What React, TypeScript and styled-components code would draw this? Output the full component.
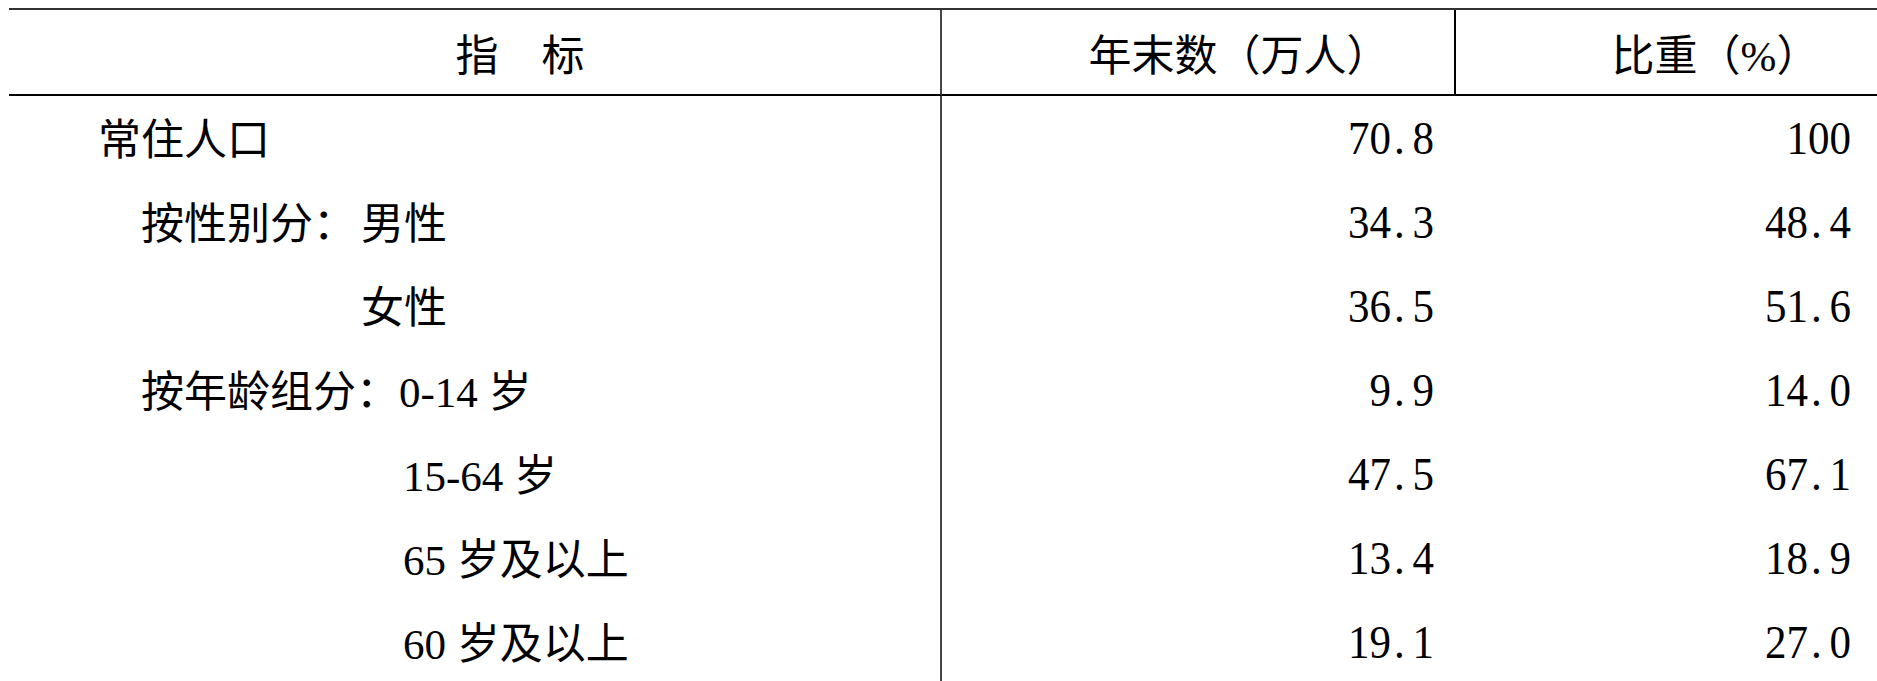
import React from "react";
import styled, { createGlobalStyle } from "styled-components";

const GlobalStyle = createGlobalStyle`
  html, body {
    margin: 0;
    padding: 0;
    background: #ffffff;
  }
  body {
    font-family: "Liberation Serif", "Noto Sans CJK SC", serif;
    color: #000000;
  }
`;

const Page = styled.main`
  padding: 8px 0 0 9px;
  height: 681px;
  box-sizing: border-box;
  overflow: hidden;
`;

const Table = styled.div`
  display: grid;
  grid-template-columns: 933px 514px 1fr;
  grid-template-rows: 86px;
  grid-auto-rows: 84px;
  border-top: 2px solid #333333;
  font-size: 43px;
`;

const HeadCell = styled.div<{ $shift: number; $rule?: string }>`
  display: flex;
  align-items: center;
  justify-content: center;
  padding-left: ${(p) => p.$shift}px;
  border-bottom: 2px solid #000000;
  border-right: ${(p) => (p.$rule ? `2px solid ${p.$rule}` : "none")};
  white-space: nowrap;
`;

const LabelCell = styled.div<{ $indent: number }>`
  display: flex;
  align-items: center;
  padding-left: ${(p) => p.$indent}px;
  padding-bottom: 4px;
  border-right: 2px solid #444444;
  white-space: nowrap;
`;

const Prefix = styled.span<{ $width: number }>`
  display: inline-block;
  min-width: ${(p) => p.$width}px;
`;

const ValueCell = styled.div<{ $pad: number }>`
  display: flex;
  align-items: center;
  justify-content: flex-end;
  padding-right: ${(p) => p.$pad}px;
  white-space: nowrap;
`;

const Figure = styled.span`
  display: inline-block;
  transform: scaleY(1.1);
`;

const Dot = styled.span`
  display: inline-block;
  width: 0.5em;
  padding-left: 3px;
  box-sizing: border-box;
  text-align: left;
`;

type Row = {
  indent: number;
  prefix?: string;
  prefixWidth?: number;
  label: string;
  count: string;
  share: string;
};

const rows: Row[] = [
  { indent: 89, label: "常住人口", count: "70.8", share: "100" },
  { indent: 132, prefix: "按性别分：", prefixWidth: 220, label: "男性", count: "34.3", share: "48.4" },
  { indent: 352, label: "女性", count: "36.5", share: "51.6" },
  { indent: 132, prefix: "按年龄组分：", prefixWidth: 256, label: "0-14 岁", count: "9.9", share: "14.0" },
  { indent: 394, label: "15-64 岁", count: "47.5", share: "67.1" },
  { indent: 394, label: "65 岁及以上", count: "13.4", share: "18.9" },
  { indent: 394, label: "60 岁及以上", count: "19.1", share: "27.0" },
];

function Num({ value }: { value: string }): JSX.Element {
  const [whole, frac] = value.split(".");
  return (
    <Figure>
      {whole}
      {frac !== undefined && (
        <>
          <Dot>.</Dot>
          {frac}
        </>
      )}
    </Figure>
  );
}

function App(): JSX.Element {
  return (
    <>
      <GlobalStyle />
      <Page>
        <Table>
          <HeadCell $shift={91} $rule="#444444">
            指　标
          </HeadCell>
          <HeadCell $shift={82} $rule="#000000">
            年末数（万人）
          </HeadCell>
          <HeadCell $shift={98}>比重（%）</HeadCell>

          {rows.map((r) => (
            <React.Fragment key={r.label + r.count}>
              <LabelCell $indent={r.indent}>
                {r.prefix && <Prefix $width={r.prefixWidth ?? 0}>{r.prefix}</Prefix>}
                {r.label}
              </LabelCell>
              <ValueCell $pad={22}>
                <Num value={r.count} />
              </ValueCell>
              <ValueCell $pad={26}>
                <Num value={r.share} />
              </ValueCell>
            </React.Fragment>
          ))}
        </Table>
      </Page>
    </>
  );
}

export default App;
